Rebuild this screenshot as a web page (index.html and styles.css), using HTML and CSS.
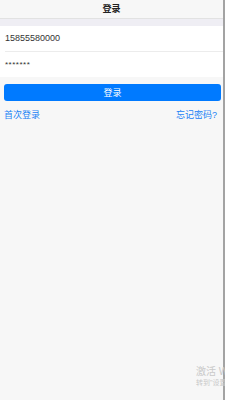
FILE: index.html
```html
<!DOCTYPE html>
<html lang="zh-CN">
<head>
  <meta charset="UTF-8">
  <meta name="viewport" content="width=device-width, initial-scale=1.0">
  <title>登录</title>
  <link rel="stylesheet" href="styles.css">
</head>
<body>

  <div class="page">
    <!-- Top bar -->
    <div class="nav-bar">登录</div>
    <div class="gap-band"></div>

    <!-- Account fields -->
    <div class="form-group">
      <div class="form-row">15855580000</div>
      <div class="form-row password">*******</div>
    </div>

    <button class="login-button">登录</button>

    <div class="link-row">
      <a class="link" href="#">首次登录</a>
      <a class="link" href="#">忘记密码?</a>
    </div>
  </div>

  <!-- Activation watermark over the page -->
  <div class="watermark">
    <div class="watermark-title">激活 Windows</div>
    <div class="watermark-sub">转到"设置"以激活 Windows。</div>
  </div>

</body>
</html>
```

FILE: styles.css
```css
body {
  font-family: "Liberation Sans", "Noto Sans CJK SC", sans-serif;
  background-color: #f7f7f7;
  margin: 0;
  padding: 0;
  height: 400px;
  overflow: hidden;
  position: relative;
}

.page {
  height: 400px;
  border-right: 2px solid #a3a3a3;
  box-sizing: border-box;
}

.nav-bar {
  height: 18px;
  line-height: 18px;
  text-align: center;
  font-size: 9px;
  font-weight: bold;
  color: #222;
  background-color: #f7f7f7;
  border-bottom: 1px solid #e2e2e2;
}

.gap-band {
  height: 7px;
  background-color: #efeef4;
}

.form-group {
  background-color: #ffffff;
  padding-left: 5px;
}

.form-row {
  height: 25px;
  line-height: 25px;
  font-size: 9px;
  color: #333;
  border-bottom: 1px solid #ececec;
}

.form-row.password {
  border-bottom: none;
  font-size: 8px;
  letter-spacing: 0.5px;
}

.login-button {
  display: block;
  width: 217px;
  height: 17px;
  margin: 7px 0 0 4px;
  padding: 0;
  border: none;
  border-radius: 3px;
  background-color: #007aff;
  color: #ffffff;
  font-family: inherit;
  font-size: 9px;
}

.link-row {
  display: flex;
  justify-content: space-between;
  padding: 7px 6px 0 4px;
}

.link {
  font-size: 9px;
  color: #1a82f5;
  text-decoration: none;
}

.watermark {
  position: absolute;
  left: 196px;
  top: 366px;
  white-space: nowrap;
  color: #c9c9c9;
}

.watermark-title {
  font-size: 10px;
  line-height: 12px;
}

.watermark-sub {
  font-size: 7px;
  line-height: 10px;
}
```
